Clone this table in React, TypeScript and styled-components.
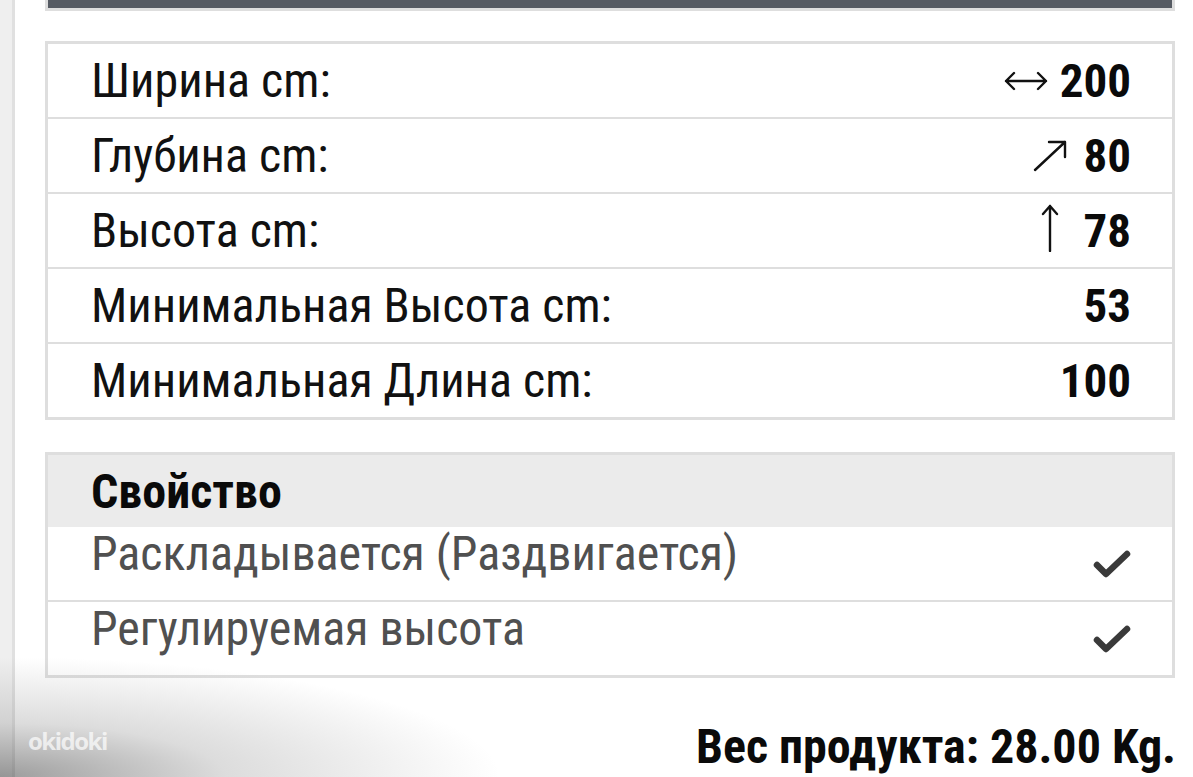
import styled, { createGlobalStyle } from 'styled-components';

const GlobalStyle = createGlobalStyle`
  html, body {
    margin: 0;
    padding: 0;
    background: #ffffff;
  }
  body {
    font-family: 'Roboto Condensed', Roboto, 'Liberation Sans', sans-serif;
    font-stretch: 75%;
    color: #111;
  }
`;

// arrows in the value column
const ArrowBoth = () => (
  <ArrowIcon width="44" height="20" viewBox="0 0 44 20">
    <path d="M2 10 H42 M10 2 L2 10 L10 18 M34 2 L42 10 L34 18" />
  </ArrowIcon>
);

const ArrowDiag = () => (
  <ArrowIcon width="34" height="32" viewBox="0 0 34 32" $after={4}>
    <path d="M2 30 L32 2 M16 2 H32 V17" />
  </ArrowIcon>
);

const ArrowUp = () => (
  <ArrowIcon width="18" height="48" viewBox="0 0 18 48" $lift={-6} $after={12}>
    <path d="M9 47 V2 M2 10 L9 2 L16 10" />
  </ArrowIcon>
);

const dims = [
  { label: 'Ширина cm:', arrow: <ArrowBoth />, value: '200' },
  { label: 'Глубина cm:', arrow: <ArrowDiag />, value: '80' },
  { label: 'Высота cm:', arrow: <ArrowUp />, value: '78' },
  { label: 'Минимальная Высота cm:', arrow: null, value: '53' },
  { label: 'Минимальная Длина cm:', arrow: null, value: '100' },
];

const features = ['Раскладывается (Раздвигается)', 'Регулируемая высота'];

const App = () => {
  return (
    <Page>
      <GlobalStyle />
      <SideStrip />
      <Content>
        <TopBar />
        <Table>
          {dims.map((d) => (
            <DimRow key={d.label}>
              <Label>{d.label}</Label>
              <Value>
                {d.arrow}
                {d.value}
              </Value>
            </DimRow>
          ))}
        </Table>
        <Table>
          <HeadRow>Свойство</HeadRow>
          {features.map((f) => (
            <FeatureRow key={f}>
              <FeatureLabel>{f}</FeatureLabel>
              <Check viewBox="0 0 38 30">
                <path d="M4 16 L13 25 L34 5" />
              </Check>
            </FeatureRow>
          ))}
        </Table>
        <Weight>Вес продукта: 28.00 Kg.</Weight>
      </Content>
      <Shade />
      <Watermark>okidoki</Watermark>
    </Page>
  );
};

const Page = styled.div`
  position: relative;
  display: flex;
  width: 1193px;
  height: 777px;
  overflow: hidden;
  background: #fff;
`;

const SideStrip = styled.div`
  width: 12px;
  flex: none;
  background: #efefef;
  border-right: 3px solid #e0e0e0;
`;

const Content = styled.div`
  display: flex;
  flex-direction: column;
  padding-left: 30px;
  width: 1130px;
`;

const TopBar = styled.div`
  height: 8px;
  background: #565b63;
  border: 3px solid #dedede;
  border-top: none;
  margin-bottom: 30px;
`;

const Table = styled.div`
  border: 3px solid #dedede;
  margin-bottom: 32px;
`;

const DimRow = styled.div`
  display: flex;
  align-items: center;
  justify-content: space-between;
  height: 73px;
  padding: 0 41px 0 43px;
  & + & {
    border-top: 2px solid #dedede;
  }
`;

const Label = styled.span`
  font-size: 48px;
  color: #111;
`;

const Value = styled.span`
  display: flex;
  align-items: center;
  gap: 12px;
  font-size: 47px;
  font-weight: 700;
  color: #0a0a0a;
`;

const ArrowIcon = styled.svg<{ $lift?: number; $after?: number }>`
  fill: none;
  stroke: #111;
  stroke-width: 2.4;
  stroke-linecap: round;
  stroke-linejoin: round;
  margin-top: ${({ $lift }) => $lift ?? 0}px;
  margin-right: ${({ $after }) => $after ?? 0}px;
`;

const HeadRow = styled.div`
  display: flex;
  align-items: center;
  height: 72px;
  padding: 0 43px;
  background: #ebebeb;
  font-size: 48px;
  font-weight: 700;
  color: #0a0a0a;
`;

const FeatureRow = styled.div`
  display: flex;
  align-items: center;
  justify-content: space-between;
  height: 73px;
  padding: 0 41px 0 43px;
  & + & {
    border-top: 2px solid #dedede;
  }
`;

const FeatureLabel = styled.span`
  font-size: 48px;
  color: #505050;
  margin-top: -20px;
`;

const Check = styled.svg`
  width: 38px;
  height: 30px;
  margin-top: 0;
  fill: none;
  stroke: #3a3a3a;
  stroke-width: 6.5;
  stroke-linecap: round;
  stroke-linejoin: round;
`;

const Weight = styled.div`
  align-self: flex-end;
  font-size: 48px;
  font-weight: 700;
  color: #0a0a0a;
  margin-right: -1px;
  margin-top: 8px;
`;

const Shade = styled.div`
  position: absolute;
  left: 0;
  bottom: 0;
  width: 700px;
  height: 260px;
  background: radial-gradient(500px 120px at 0 100%, rgba(90, 90, 90, 0.6) 0%, rgba(140, 140, 140, 0.3) 45%, rgba(255, 255, 255, 0) 100%);
  pointer-events: none;
`;

const Watermark = styled.div`
  position: absolute;
  left: 28px;
  top: 724px;
  font-family: 'Open Sans', sans-serif;
  font-stretch: 100%;
  font-size: 24px;
  font-weight: 700;
  letter-spacing: -1.5px;
  color: rgba(255, 255, 255, 0.7);
`;

export default App;
